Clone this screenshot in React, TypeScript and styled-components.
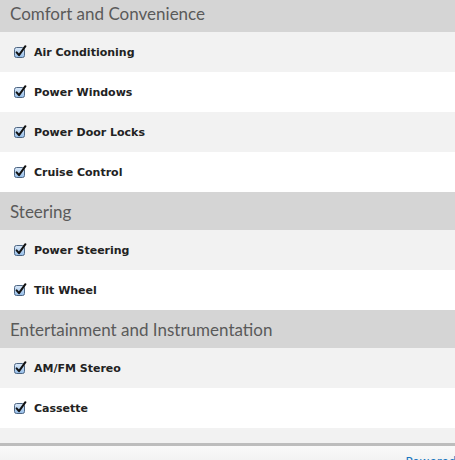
import React from "react";
import styled, { createGlobalStyle } from "styled-components";

const Global = createGlobalStyle`
  html, body { margin: 0; padding: 0; background: #fff; }
  body { overflow: hidden; }
`;

const Page = styled.div`
  width: 455px;
  height: 460px;
  display: flex;
  flex-direction: column;
  overflow: hidden;
`;

const Scroller = styled.div`
  flex: 1;
  overflow: hidden;
`;

const List = styled.div`
  margin-top: -6px;
  display: flex;
  flex-direction: column;
`;

const SectionHeader = styled.div`
  height: 38px;
  background: #d5d5d5;
  display: flex;
  align-items: center;
  padding-left: 10px;
  font-family: Lato, "Open Sans", sans-serif;
  font-size: 17px;
  color: #5a5a5a;
`;

const Row = styled.div<{ $alt: boolean }>`
  height: 40px;
  flex-shrink: 0;
  background: ${(p) => (p.$alt ? "#f2f2f2" : "#ffffff")};
  display: flex;
  align-items: center;
  padding-left: 13px;
  gap: 7px;
`;

const Label = styled.span<{ $on: boolean }>`
  font-family: "DejaVu Sans", Verdana, sans-serif;
  font-weight: bold;
  font-size: 11px;
  color: ${(p) => (p.$on ? "#222" : "#aaa")};
`;

const Footer = styled.div`
  height: 14px;
  flex-shrink: 0;
  border-top: 3px solid #bdbdbd;
  background: linear-gradient(#fafafa, #f3f3f3);
  display: flex;
  justify-content: flex-end;
  overflow: hidden;
`;

const FooterLink = styled.span`
  font-family: "DejaVu Sans", Verdana, sans-serif;
  font-size: 12px;
  color: #1a76c0;
  margin-top: 9px;
  margin-right: -20px;
  white-space: nowrap;
`;

const Check: React.FC<{ on: boolean }> = ({ on }) => (
  <svg width="14" height="14" viewBox="0 0 14 14">
    <defs>
      <linearGradient id="cbg" x1="0" y1="0" x2="0" y2="1">
        <stop offset="0" stopColor="#dbe9f8" />
        <stop offset="1" stopColor="#93bce8" />
      </linearGradient>
    </defs>
    <rect
      x="1.5"
      y="2.5"
      width="10"
      height="10"
      rx="2"
      fill={on ? "url(#cbg)" : "#fafafa"}
      stroke={on ? "#4d6582" : "#a8a8a8"}
      strokeWidth="1"
    />
    {on && (
      <path
        d="M3.6 7.4 L6 10.2 L12.4 1.2"
        fill="none"
        stroke="#111"
        strokeWidth="2"
        strokeLinecap="round"
        strokeLinejoin="round"
      />
    )}
  </svg>
);

type Section = { title: string; items: { label: string; on: boolean }[] };

const sections: Section[] = [
  {
    title: "Comfort and Convenience",
    items: [
      { label: "Air Conditioning", on: true },
      { label: "Power Windows", on: true },
      { label: "Power Door Locks", on: true },
      { label: "Cruise Control", on: true },
    ],
  },
  {
    title: "Steering",
    items: [
      { label: "Power Steering", on: true },
      { label: "Tilt Wheel", on: true },
    ],
  },
  {
    title: "Entertainment and Instrumentation",
    items: [
      { label: "AM/FM Stereo", on: true },
      { label: "Cassette", on: true },
      { label: "CD (Single Disc)", on: false },
    ],
  },
];

export default function App() {
  return (
    <Page>
      <Global />
      <Scroller>
        <List>
          {sections.map((s) => (
            <React.Fragment key={s.title}>
              <SectionHeader>{s.title}</SectionHeader>
              {s.items.map((it, i) => (
                <Row key={it.label} $alt={i % 2 === 0}>
                  <Check on={it.on} />
                  <Label $on={it.on}>{it.label}</Label>
                </Row>
              ))}
            </React.Fragment>
          ))}
        </List>
      </Scroller>
      <Footer>
        <FooterLink>Powered by</FooterLink>
      </Footer>
    </Page>
  );
}
